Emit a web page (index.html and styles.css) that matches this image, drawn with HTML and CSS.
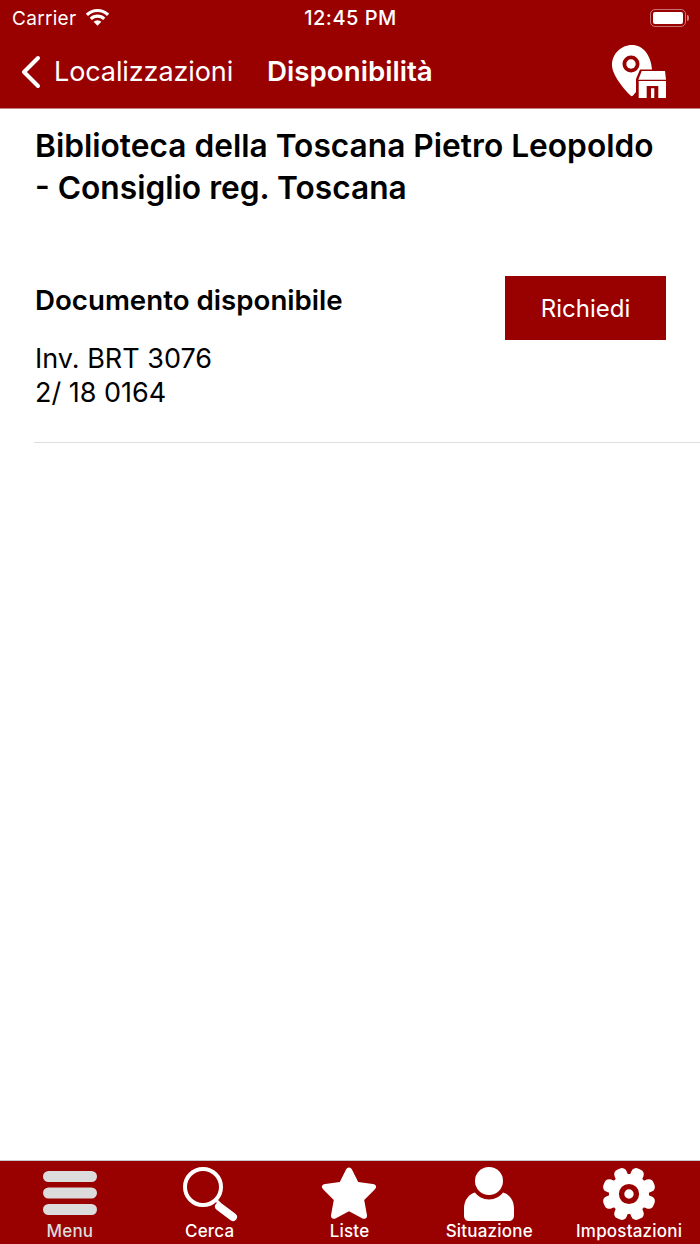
FILE: index.html
```html
<!DOCTYPE html>
<html lang="it">
<head>
  <meta charset="UTF-8">
  <meta name="viewport" content="width=device-width, initial-scale=1.0">
  <title>Disponibilità</title>
  <link rel="stylesheet" href="styles.css">
</head>
<body>
  <header class="top-bar">
    <div class="status-bar">
      <div class="status-left">
        <span class="carrier">Carrier</span>
        <svg class="wifi" viewBox="0 0 25 18" width="25" height="18">
          <path d="M1.900 6.900a15 15 0 0 1 21.200 0" fill="none" stroke="#fff" stroke-width="3.200"/>
          <path d="M5.800 10.800a9.500 9.500 0 0 1 13.400 0" fill="none" stroke="#fff" stroke-width="3.200"/>
          <path d="M12.500 17.800 8.600 13.800a5.500 5.500 0 0 1 7.800 0z" fill="#fff"/>
        </svg>
      </div>
      <span class="clock">12:45 PM</span>
      <div class="battery">
        <span class="battery-body"><span class="battery-level"></span></span>
        <span class="battery-tip"></span>
      </div>
    </div>
    <nav class="nav-bar">
      <a class="back-link">
        <svg class="back-arrow" viewBox="0 0 22 34" width="22" height="34">
          <path d="M18 3 L4 17 L18 31" fill="none" stroke="#fff" stroke-width="4" stroke-linecap="round" stroke-linejoin="round"/>
        </svg>
        <span>Localizzazioni</span>
      </a>
      <h1 class="nav-title">Disponibilità</h1>
      <svg class="place-icon" viewBox="0 0 56 56" width="56" height="56">
        <path d="M22 2C11 2 2 11 2 22c0 10 12 24 18 30 1 1.500 2.500 1.500 3.500 0L26 49V36l4-9.500h12C41 12 33 2 22 2z" fill="#fff"/>
        <circle cx="21" cy="21" r="8.500" fill="#990000"/>
        <circle cx="21" cy="21" r="4.700" fill="#fff"/>
        <path d="M31.700 28H55l1 8.700H28.300z" fill="#fff"/>
        <path d="M28.700 38H56v17H28.700z" fill="#fff"/>
        <path d="M36.700 43h11.600v12H44.300v-9.700H41V55h-4.300z" fill="#990000"/>
      </svg>
    </nav>
  </header>

  <main class="content">
    <h2 class="library-name">Biblioteca della Toscana Pietro Leopoldo - Consiglio reg. Toscana</h2>
    <section class="copy-row">
      <div class="copy-info">
        <h3 class="copy-status">Documento disponibile</h3>
        <p class="copy-details">Inv. BRT 3076<br>2/ 18 0164</p>
      </div>
      <button class="request-btn">Richiedi</button>
    </section>
  </main>

  <footer class="tab-bar">
    <a class="tab tab-menu">
      <svg viewBox="0 0 56 46" width="56" height="46">
        <rect x="1" y="1" width="54" height="11" rx="5.500" fill="#dcdcdc"/>
        <rect x="1" y="17.500" width="54" height="11" rx="5.500" fill="#dcdcdc"/>
        <rect x="1" y="34" width="54" height="11" rx="5.500" fill="#dcdcdc"/>
      </svg>
      <span>Menu</span>
    </a>
    <a class="tab">
      <svg viewBox="0 0 56 56" width="56" height="56">
        <circle cx="21" cy="21" r="18" fill="none" stroke="#fff" stroke-width="4"/>
        <path d="M33 33 L38 38" fill="none" stroke="#fff" stroke-width="3"/>
        <path d="M37 40.500 L51 51" fill="none" stroke="#fff" stroke-width="8" stroke-linecap="round"/>
      </svg>
      <span>Cerca</span>
    </a>
    <a class="tab">
      <svg viewBox="0 0 56 56" width="56" height="56">
        <path d="M28 1.500c1.600 0 2.500 1 3.200 2.400l6 12.200 14.500 2c3.600.5 4.500 3 2 5.500L43.200 34l2.700 14.800c.6 3.400-1.800 5-4.800 3.400L28 45.300l-13.100 6.900c-3 1.600-5.400 0-4.800-3.400L12.800 34 2.300 23.600c-2.500-2.500-1.600-5 2-5.500l14.500-2 6-12.200c.7-1.400 1.600-2.400 3.200-2.400z" fill="#fff"/>
      </svg>
      <span>Liste</span>
    </a>
    <a class="tab">
      <svg viewBox="0 0 56 56" width="56" height="56">
        <circle cx="28" cy="15" r="14" fill="#fff"/>
        <path d="M14 26.500c3 4 8 7 14 7s11-3 14-7c6 1.500 11 7.500 11 16v7c0 3.500-2 5.500-5.500 5.500h-39C5 55 3 53 3 49.500v-7c0-8.500 5-14.500 11-16z" fill="#fff"/>
      </svg>
      <span>Situazione</span>
    </a>
    <a class="tab">
      <svg viewBox="0 0 56 56" width="56" height="56">
        <g fill="#fff" transform="rotate(22.500 28 28)">
          <circle cx="28" cy="28" r="20"/>
          <rect x="21.500" y="1" width="13" height="54" rx="5"/>
          <rect x="21.500" y="1" width="13" height="54" rx="5" transform="rotate(45 28 28)"/>
          <rect x="21.500" y="1" width="13" height="54" rx="5" transform="rotate(90 28 28)"/>
          <rect x="21.500" y="1" width="13" height="54" rx="5" transform="rotate(135 28 28)"/>
        </g>
        <circle cx="28" cy="28" r="7.400" fill="none" stroke="#990000" stroke-width="5.400"/>
      </svg>
      <span>Impostazioni</span>
    </a>
  </footer>
</body>
</html>
```

FILE: styles.css
```css
* {
  margin: 0;
  padding: 0;
  box-sizing: border-box;
}

body {
  font-family: 'Inter', 'Liberation Sans', sans-serif;
  background-color: #ffffff;
  color: #000000;
  display: flex;
  flex-direction: column;
  height: 1244px;
  overflow: hidden;
}

/* Top bar */
.top-bar {
  background: #990000;
  color: #ffffff;
  height: 109px;
  border-bottom: 1px solid #c08080;
}

.status-bar {
  display: grid;
  grid-template-columns: 1fr auto 1fr;
  align-items: center;
  height: 36px;
  padding: 0 11px 0 12px;
}

.status-left {
  display: flex;
  align-items: center;
  gap: 9px;
}

.carrier {
  font-size: 19px;
  letter-spacing: 0.3px;
}

.wifi {
  margin-top: -2px;
}

.clock {
  font-size: 20px;
  font-weight: 500;
  letter-spacing: 0.5px;
}

.battery {
  display: flex;
  align-items: center;
  justify-content: flex-end;
  gap: 1px;
  margin-top: -1px;
}

.battery-body {
  display: block;
  width: 36px;
  height: 18px;
  padding: 2px;
  border: 1.5px solid rgba(255, 255, 255, 0.45);
  border-radius: 5px;
}

.battery-level {
  display: block;
  height: 100%;
  background: #ffffff;
  border-radius: 2px;
}

.battery-tip {
  width: 2px;
  height: 6px;
  background: rgba(255, 255, 255, 0.5);
  border-radius: 0 2px 2px 0;
}

.nav-bar {
  display: flex;
  align-items: center;
  height: 71px;
  padding: 0 34px 0 20px;
}

.back-link {
  display: flex;
  align-items: center;
  gap: 12px;
  font-size: 27px;
  letter-spacing: -0.1px;
}

.nav-title {
  font-size: 27.700px;
  font-weight: 600;
  margin: -2px 0 0 34px;
  flex: 1;
}

.place-icon {
  margin-top: -2px;
}

/* Content */
.content {
  flex: 1;
  padding-top: 16px;
}

.library-name {
  font-size: 31.700px;
  font-weight: 600;
  line-height: 42px;
  padding: 0 34px 0 35px;
}

.copy-row {
  display: flex;
  justify-content: space-between;
  align-items: flex-start;
  margin: 67px 0 0 34px;
  padding: 0 34px 32px 1px;
  border-bottom: 1px solid #dddddd;
}

.copy-status {
  font-size: 27.700px;
  font-weight: 600;
  line-height: 48px;
}

.copy-details {
  font-size: 27px;
  line-height: 34px;
  margin-top: 18px;
}

.request-btn {
  width: 161px;
  height: 64px;
  background: #990000;
  color: #ffffff;
  border: none;
  font-family: inherit;
  font-size: 24px;
}

/* Bottom tabs */
.tab-bar {
  display: grid;
  grid-template-columns: repeat(5, 1fr);
  height: 84px;
  padding-right: 1px;
  background: #990000;
  border-top: 1px solid #c9c9c9;
}

.tab {
  display: flex;
  flex-direction: column;
  align-items: center;
  justify-content: flex-end;
  color: #ffffff;
  font-size: 17px;
  font-weight: 500;
  letter-spacing: 0.2px;
  padding-bottom: 3px;
}

.tab svg {
  margin-bottom: -1px;
}

.tab-menu {
  color: #dcdcdc;
}

.tab-menu svg {
  margin-bottom: 5px;
}
```
